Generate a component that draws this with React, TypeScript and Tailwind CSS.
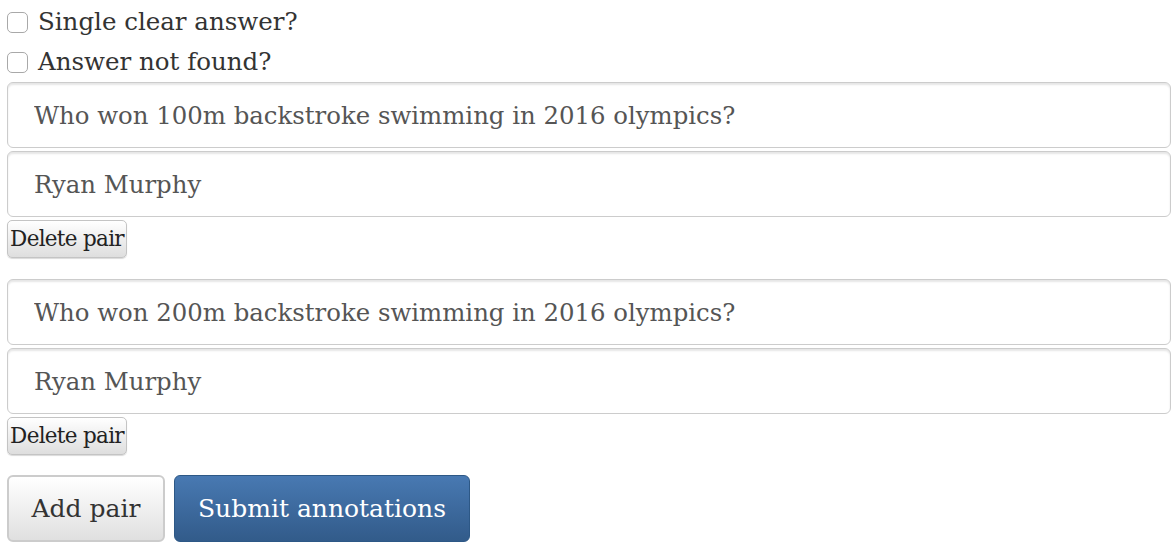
import React from "react";

const serif = { fontFamily: '"DejaVu Serif", Georgia, serif' };

function Check({ label }: { label: string }) {
  return (
    <label className="flex items-center h-[40px] pl-[7px] gap-[10px] text-[#333] text-[24.5px]">
      <input
        type="checkbox"
        className="appearance-none w-[21px] h-[21px] border border-[#a9a9a9] rounded-[5px] bg-white shrink-0"
      />
      <span>{label}</span>
    </label>
  );
}

function Field({ value }: { value: string }) {
  return (
    <input
      readOnly
      value={value}
      className="block w-[1164px] h-[66px] ml-[7px] px-[26px] border border-[#ccc] rounded-[6px] bg-white text-[#555] text-[24.4px] shadow-[inset_0_2px_2px_rgba(0,0,0,0.1)] outline-none"
      style={serif}
    />
  );
}

function Pair({ q, a }: { q: string; a: string }) {
  return (
    <div className="flex flex-col gap-[3px]">
      <Field value={q} />
      <Field value={a} />
      <button
        className="block self-start ml-[7px] w-[120px] h-[38px] px-0 whitespace-nowrap border border-[#c4c4c4] rounded-[5px] bg-gradient-to-b from-white to-[#dedede] text-[#222] text-[21.5px] tracking-[-0.7px] leading-none shadow-[0_1px_1px_rgba(0,0,0,0.15)]"
        style={serif}
      >
        Delete pair
      </button>
    </div>
  );
}

export default function App() {
  return (
    <div className="bg-white w-[1174px] h-[550px] overflow-hidden pt-[2px]" style={serif}>
      <Check label="Single clear answer?" />
      <Check label="Answer not found?" />
      <div className="flex flex-col gap-[21px]">
        <Pair q="Who won 100m backstroke swimming in 2016 olympics?" a="Ryan Murphy" />
        <Pair q="Who won 200m backstroke swimming in 2016 olympics?" a="Ryan Murphy" />
        <div className="flex gap-[9px] ml-[7px] -mt-[1px]">
          <button className="w-[158px] h-[67px] border-2 border-[#ccc] rounded-[6px] bg-gradient-to-b from-white to-[#e0e0e0] text-[#333] text-[25px]" style={serif}>
            Add pair
          </button>
          <button className="w-[296px] h-[67px] border border-[#2d5886] rounded-[6px] bg-gradient-to-b from-[#4879b2] to-[#325b8a] text-white text-[25px]" style={serif}>
            Submit annotations
          </button>
        </div>
      </div>
    </div>
  );
}
